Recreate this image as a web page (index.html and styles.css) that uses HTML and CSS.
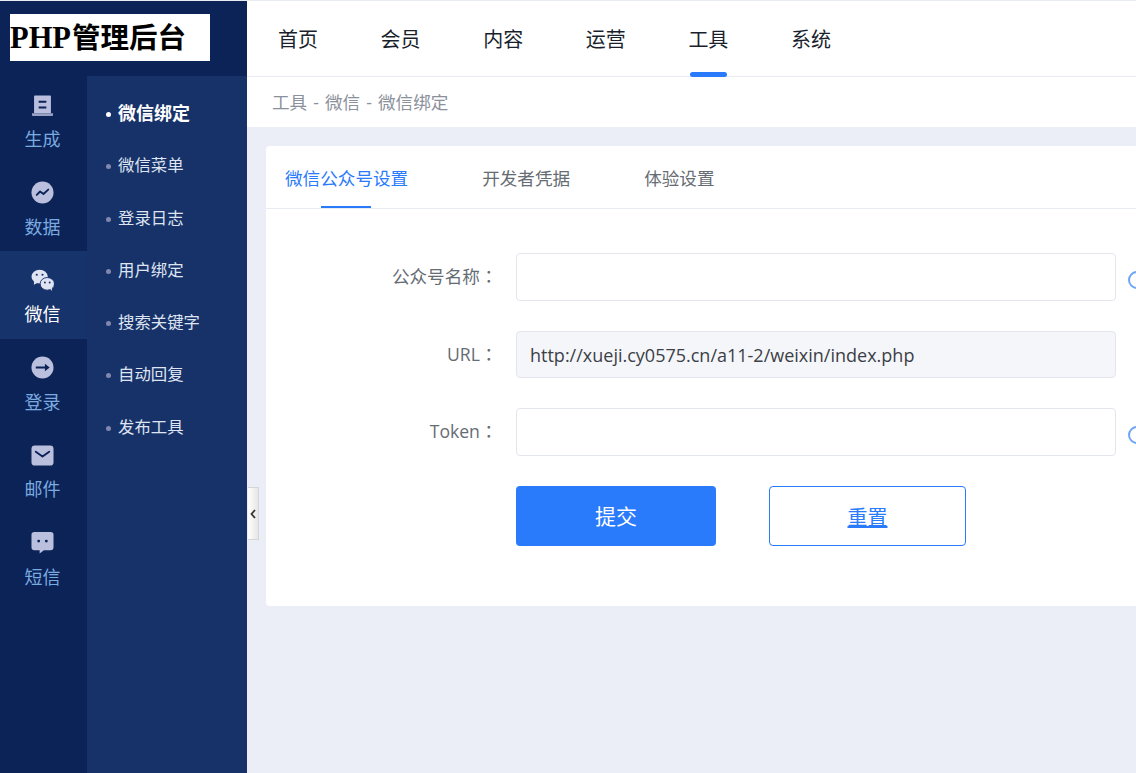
FILE: index.html
```html
<!DOCTYPE html>
<html>

<head>
    <meta charset="UTF-8">
    <meta name="viewport" content="width=device-width, initial-scale=1.0">
    <title>PHP管理后台</title>
    <link rel="stylesheet" href="styles.css">
</head>

<body>
    <div class="app">
        <aside class="sidebar">
            <div class="logo-wrap">
                <div class="logo"><span class="logo-en">PHP</span><span class="logo-cn">管理后台</span></div>
            </div>
            <div class="side-body">
                <ul class="rail">
                    <li class="rail-item">
                        <svg class="rail-icon" viewBox="0 0 24 24">
                            <path fill="#b9bfdc" d="M4 1.500h16a.8.8 0 0 1 .8.8V20H3.200V2.300a.8.8 0 0 1 .8-.8z"/>
                            <path fill="#98a0c4" d="M1 20h22v2a1 1 0 0 1-1 1H2a1 1 0 0 1-1-1z"/>
                            <path fill="#0c2357" d="M8 7h8v2H8zM8 13h8v2H8z"/>
                        </svg>
                        <span>生成</span>
                    </li>
                    <li class="rail-item">
                        <svg class="rail-icon" viewBox="0 0 24 24">
                            <circle cx="12" cy="12" r="11.500" fill="#b9bfdc"/>
                            <path fill="none" stroke="#0c2357" stroke-width="2" stroke-linecap="round" stroke-linejoin="round" d="M6 14.500l3.500-3.500 3.500 2.500 5-4.500"/>
                        </svg>
                        <span>数据</span>
                    </li>
                    <li class="rail-item active">
                        <svg class="rail-icon" viewBox="0 0 24 24">
                            <ellipse cx="9" cy="8" rx="8.500" ry="7.200" fill="#dfe3f2"/>
                            <path fill="#dfe3f2" d="M3.500 12l-.6 4.500 4.600-2.500z"/>
                            <ellipse cx="17" cy="15.500" rx="7.500" ry="6.600" fill="#dfe3f2" stroke="#17336b" stroke-width="1"/>
                            <path fill="#dfe3f2" d="M19.500 20l2.500 3-.3-4.500z"/>
                            <circle cx="6" cy="6" r="1.100" fill="#17336b"/>
                            <circle cx="12" cy="6" r="1.100" fill="#17336b"/>
                            <circle cx="14.500" cy="14" r="1" fill="#17336b"/>
                            <circle cx="19.500" cy="14" r="1" fill="#17336b"/>
                        </svg>
                        <span>微信</span>
                    </li>
                    <li class="rail-item">
                        <svg class="rail-icon" viewBox="0 0 24 24">
                            <circle cx="12" cy="12" r="11.500" fill="#b9bfdc"/>
                            <path fill="#0c2357" d="M5 11h9.500V8.200L19.500 12l-5 3.800V13H5z"/>
                        </svg>
                        <span>登录</span>
                    </li>
                    <li class="rail-item">
                        <svg class="rail-icon" viewBox="0 0 24 24">
                            <rect x="0.500" y="1.500" width="23" height="21" rx="3.500" fill="#b9bfdc"/>
                            <path fill="none" stroke="#0c2357" stroke-width="2" stroke-linecap="round" stroke-linejoin="round" d="M5 8l7 5 7-5"/>
                        </svg>
                        <span>邮件</span>
                    </li>
                    <li class="rail-item">
                        <svg class="rail-icon" viewBox="0 0 24 24">
                            <path fill="#b9bfdc" d="M3.500 1h17a3 3 0 0 1 3 3v13a3 3 0 0 1-3 3h-7L9 23.500V20H3.500a3 3 0 0 1-3-3V4a3 3 0 0 1 3-3z"/>
                            <circle cx="8" cy="10.500" r="1.500" fill="#0c2357"/>
                            <circle cx="16" cy="10.500" r="1.500" fill="#0c2357"/>
                        </svg>
                        <span>短信</span>
                    </li>
                </ul>
                <ul class="submenu">
                    <li class="active">微信绑定</li>
                    <li>微信菜单</li>
                    <li>登录日志</li>
                    <li>用户绑定</li>
                    <li>搜索关键字</li>
                    <li>自动回复</li>
                    <li>发布工具</li>
                </ul>
            </div>
        </aside>

        <main class="main">
            <nav class="topnav">
                <a>首页</a>
                <a>会员</a>
                <a>内容</a>
                <a>运营</a>
                <a class="active">工具</a>
                <a>系统</a>
            </nav>
            <div class="breadcrumb">工具 - 微信 - 微信绑定</div>

            <div class="content">
                <div class="collapse-btn">
                    <svg viewBox="0 0 6 10" width="6" height="10">
                        <path fill="none" stroke="#333" stroke-width="1.800" d="M5 1L1.500 5 5 9"/>
                    </svg>
                </div>
                <div class="card">
                    <div class="tabs">
                        <a class="active">微信公众号设置</a>
                        <a>开发者凭据</a>
                        <a>体验设置</a>
                    </div>
                    <form class="form">
                        <div class="form-group">
                            <label>公众号名称<span class="colon">：</span></label>
                            <input type="text">
                            <i class="hint"></i>
                        </div>
                        <div class="form-group form-group-url">
                            <label>URL<span class="colon">：</span></label>
                            <input class="readonly" type="text" value="http://xueji.cy0575.cn/a11-2/weixin/index.php" readonly>
                        </div>
                        <div class="form-group">
                            <label>Token<span class="colon">：</span></label>
                            <input type="text">
                            <i class="hint"></i>
                        </div>
                        <div class="form-actions">
                            <button type="button" class="btn-submit">提交</button>
                            <a class="btn-reset">重置</a>
                        </div>
                    </form>
                </div>
            </div>
        </main>
    </div>
</body>

</html>
```

FILE: styles.css
```css
* {
    box-sizing: border-box;
}
html, body {
    height: 100%;
}
body {
    margin: 0;
    overflow: hidden;
    font-family: "Open Sans", "Noto Sans CJK SC", sans-serif;
    background: #ebeef7;
}
ul {
    list-style: none;
    margin: 0;
    padding: 0;
}
.app {
    display: flex;
    height: 773px;
    padding-top: 1px;
    background: #e8ebf2;
}
.sidebar {
    width: 247px;
    flex-shrink: 0;
    display: flex;
    flex-direction: column;
    background: #0c2357;
}
.logo-wrap {
    height: 75px;
    padding: 13px 10px;
}
.logo {
    width: 200px;
    height: 47px;
    background: #fff;
    color: #000;
    font-family: "Liberation Serif", "Noto Sans CJK SC", serif;
    font-weight: 700;
    line-height: 49px;
    white-space: nowrap;
    overflow: hidden;
}
.logo-en {
    font-size: 30.5px;
}
.logo-cn {
    margin-left: 1px;
    font-size: 28.5px;
}
.side-body {
    flex: 1;
    display: flex;
}
.rail {
    width: 87px;
    flex-shrink: 0;
    background: #0c2357;
}
.rail-item {
    height: 87.6px;
    padding: 17.5px 2px 0 0;
    display: flex;
    flex-direction: column;
    align-items: center;
    color: #79aae0;
    font-size: 18px;
    line-height: 26px;
}
.rail-item span {
    margin-top: 9.5px;
}
.rail-item.active {
    background: #17336b;
    color: #fff;
}
.rail-icon {
    width: 23px;
    height: 23px;
}
.submenu {
    flex: 1;
    background: #173268;
    padding-top: 11px;
}
.submenu li {
    position: relative;
    height: 52.3px;
    line-height: 52.4px;
    padding-left: 31px;
    color: #dfe4f2;
    font-size: 16.4px;
}
.submenu li::before {
    content: "";
    position: absolute;
    left: 19px;
    top: 25px;
    width: 5px;
    height: 5px;
    border-radius: 50%;
    background: #8288ad;
}
.submenu li.active {
    color: #fff;
    font-size: 18px;
    font-weight: 700;
    line-height: 52px;
}
.submenu li.active::before {
    background: #fff;
}
.main {
    flex: 1;
    min-width: 0;
    display: flex;
    flex-direction: column;
    background: #ebeef7;
}
.topnav {
    height: 76px;
    flex-shrink: 0;
    display: flex;
    gap: 62.6px;
    padding-left: 31px;
    background: #fff;
    border-bottom: 1px solid #e9ebf4;
}
.topnav a {
    position: relative;
    line-height: 77px;
    font-size: 20px;
    color: #1a1f2e;
}
.topnav a.active::after {
    content: "";
    position: absolute;
    left: 2px;
    right: 1px;
    bottom: -1px;
    height: 5px;
    border-radius: 3px;
    background: #2a7afc;
}
.breadcrumb {
    height: 50px;
    flex-shrink: 0;
    padding-left: 25px;
    line-height: 50px;
    font-size: 17.6px;
    word-spacing: 1.5px;
    color: #8b919c;
    background: #fff;
}
.content {
    position: relative;
    flex: 1;
    padding: 19px 0 0 19px;
}
.collapse-btn {
    position: absolute;
    left: 1px;
    top: 360px;
    width: 11px;
    height: 53px;
    display: flex;
    align-items: center;
    justify-content: center;
    border: 1px solid #d5d5d5;
    border-left: 0;
    background: linear-gradient(to right, #fff, #e6e6e6);
}
.card {
    width: 900px;
    height: 460px;
    background: #fff;
    border-radius: 4px;
}
.tabs {
    height: 63px;
    display: flex;
    gap: 74px;
    padding-left: 19px;
    border-bottom: 1px solid #e9ebf4;
}
.tabs a {
    position: relative;
    line-height: 64px;
    font-size: 17.6px;
    color: #666c74;
}
.tabs a.active {
    color: #2a7afc;
}
.tabs a.active::after {
    content: "";
    position: absolute;
    left: 36px;
    bottom: 0;
    width: 50px;
    height: 2px;
    background: #2a7afc;
}
.form {
    padding-top: 44px;
}
.form-group {
    display: flex;
    align-items: center;
    height: 48px;
    margin-bottom: 30px;
}
.form-group-url {
    height: 47px;
}
.form-group label {
    width: 250px;
    padding: 0 18.5px 3px 0;
    text-align: right;
    font-size: 17.6px;
    color: #666c74;
}
.colon {
    font-family: "Noto Sans CJK TC", sans-serif;
}
.form-group input {
    width: 600px;
    height: 100%;
    padding: 0 13px;
    border: 1px solid #e4e6ee;
    border-radius: 4px;
    outline: none;
    font-family: inherit;
    font-size: 18px;
    color: #333;
    background: #fff;
}
.form-group input.readonly {
    background: #f5f6fa;
    color: #3b3f46;
}
.hint {
    width: 18px;
    height: 18px;
    margin: 6px 0 0 12px;
    flex-shrink: 0;
    border: 2px solid #6fa5f5;
    border-radius: 50%;
}
.form-actions {
    display: flex;
    padding-left: 250px;
}
.btn-submit {
    width: 200px;
    height: 60px;
    padding: 0 0 2px;
    border: none;
    border-radius: 4px;
    background: #2a7afc;
    color: #fff;
    font-family: inherit;
    font-size: 21px;
    cursor: pointer;
}
.btn-reset {
    width: 197px;
    height: 60px;
    margin-left: 53px;
    border: 1px solid #2a7afc;
    border-radius: 4px;
    color: #2a7afc;
    font-size: 20px;
    line-height: 62px;
    text-align: center;
    text-decoration: underline;
}
```
